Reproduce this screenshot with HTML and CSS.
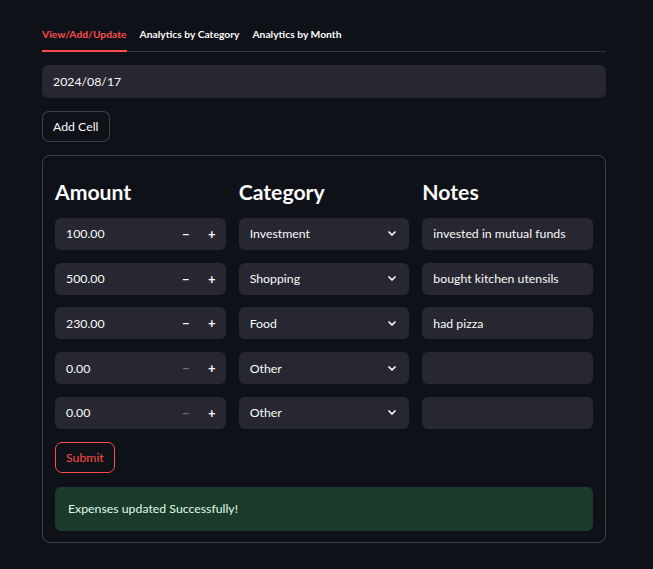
FILE: index.html
```html
<!DOCTYPE html>
<html>
<head>
<meta charset="utf-8">
<link rel="stylesheet" href="styles.css">
</head>
<body>
<div class="page">
  <div class="tabs">
    <div class="tab active">View/Add/Update</div>
    <div class="tab">Analytics by Category</div>
    <div class="tab">Analytics by Month</div>
  </div>
  <div class="date-input">2024/08/17</div>
  <button class="btn">Add Cell</button>
  <div class="form">
    <div class="grid">
      <h3 class="head">Amount</h3>
      <h3 class="head">Category</h3>
      <h3 class="head">Notes</h3>

      <div class="num"><span class="val">100.00</span><span class="step">&minus;</span><span class="step">+</span></div>
      <div class="sel"><span class="val">Investment</span><svg class="chev" viewBox="0 0 8 5" width="8" height="5"><path d="M1 1l3 3 3-3" fill="none" stroke="#fafafa" stroke-width="1.7" stroke-linecap="round" stroke-linejoin="round"/></svg></div>
      <div class="txt">invested in mutual funds</div>

      <div class="num"><span class="val">500.00</span><span class="step">&minus;</span><span class="step">+</span></div>
      <div class="sel"><span class="val">Shopping</span><svg class="chev" viewBox="0 0 8 5" width="8" height="5"><path d="M1 1l3 3 3-3" fill="none" stroke="#fafafa" stroke-width="1.7" stroke-linecap="round" stroke-linejoin="round"/></svg></div>
      <div class="txt">bought kitchen utensils</div>

      <div class="num"><span class="val">230.00</span><span class="step">&minus;</span><span class="step">+</span></div>
      <div class="sel"><span class="val">Food</span><svg class="chev" viewBox="0 0 8 5" width="8" height="5"><path d="M1 1l3 3 3-3" fill="none" stroke="#fafafa" stroke-width="1.7" stroke-linecap="round" stroke-linejoin="round"/></svg></div>
      <div class="txt">had pizza</div>

      <div class="num"><span class="val">0.00</span><span class="step dis">&minus;</span><span class="step">+</span></div>
      <div class="sel"><span class="val">Other</span><svg class="chev" viewBox="0 0 8 5" width="8" height="5"><path d="M1 1l3 3 3-3" fill="none" stroke="#fafafa" stroke-width="1.7" stroke-linecap="round" stroke-linejoin="round"/></svg></div>
      <div class="txt"></div>

      <div class="num"><span class="val">0.00</span><span class="step dis">&minus;</span><span class="step">+</span></div>
      <div class="sel"><span class="val">Other</span><svg class="chev" viewBox="0 0 8 5" width="8" height="5"><path d="M1 1l3 3 3-3" fill="none" stroke="#fafafa" stroke-width="1.7" stroke-linecap="round" stroke-linejoin="round"/></svg></div>
      <div class="txt"></div>
    </div>
    <button class="btn submit">Submit</button>
    <div class="success">Expenses updated Successfully!</div>
  </div>
</div>
</body>
</html>
```
FILE: styles.css
```css
html, body {
  margin: 0;
  padding: 0;
  background: #0e1117;
}
body {
  font-family: "Lato", "Liberation Sans", sans-serif;
  color: #fafafa;
  font-size: 12.3px;
}
.page {
  width: 564px;
  padding: 19px 0 0 42px;
}
.tabs {
  display: flex;
  gap: 13px;
  border-bottom: 1px solid #31333f;
}
.tab {
  font-size: 10.3px;
  font-weight: 700;
  height: 31px;
  line-height: 30px;
  border-bottom: 2px solid transparent;
  margin-bottom: -1px;
}
.tab.active {
  color: #ff4b4b;
  border-bottom-color: #ff4b4b;
}
.date-input {
  margin-top: 13px;
  height: 33px;
  line-height: 33px;
  background: #262730;
  border-radius: 6px;
  padding-left: 11px;
}
.btn {
  display: block;
  margin-top: 13px;
  height: 31px;
  padding: 0 10px;
  background: #0e1117;
  color: #fafafa;
  border: 1px solid rgba(250, 250, 250, 0.2);
  border-radius: 7px;
  font-family: inherit;
  font-size: 12.3px;
}
.form {
  margin-top: 13px;
  border: 1px solid rgba(250, 250, 250, 0.2);
  border-radius: 8px;
  padding: 23px 12px 11px 12px;
}
.grid {
  display: grid;
  grid-template-columns: 1fr 1fr 1fr;
  column-gap: 13px;
  row-gap: 12.8px;
}
.head {
  margin: 0;
  font-size: 21.2px;
  font-weight: 700;
  line-height: 26px;
  height: 26px;
}
.num, .sel, .txt {
  height: 32px;
  background: #262730;
  border-radius: 6px;
  display: flex;
  align-items: center;
  padding-left: 11px;
  box-sizing: border-box;
}
.num .val, .sel .val {
  flex: 1;
}
.step {
  width: 26px;
  text-align: center;
  font-size: 13px;
  font-weight: 700;
}
.step:last-child {
  margin-right: 1px;
}
.step.dis {
  color: #6c6d74;
}
.chev {
  margin-right: 13px;
}
.submit {
  margin-top: 13px;
  color: #ff4b4b;
  border-color: #ff4b4b;
}
.success {
  margin-top: 14px;
  height: 44px;
  line-height: 44px;
  background: #1c3a2a;
  color: #dffde9;
  border-radius: 6px;
  padding-left: 13px;
}
```
